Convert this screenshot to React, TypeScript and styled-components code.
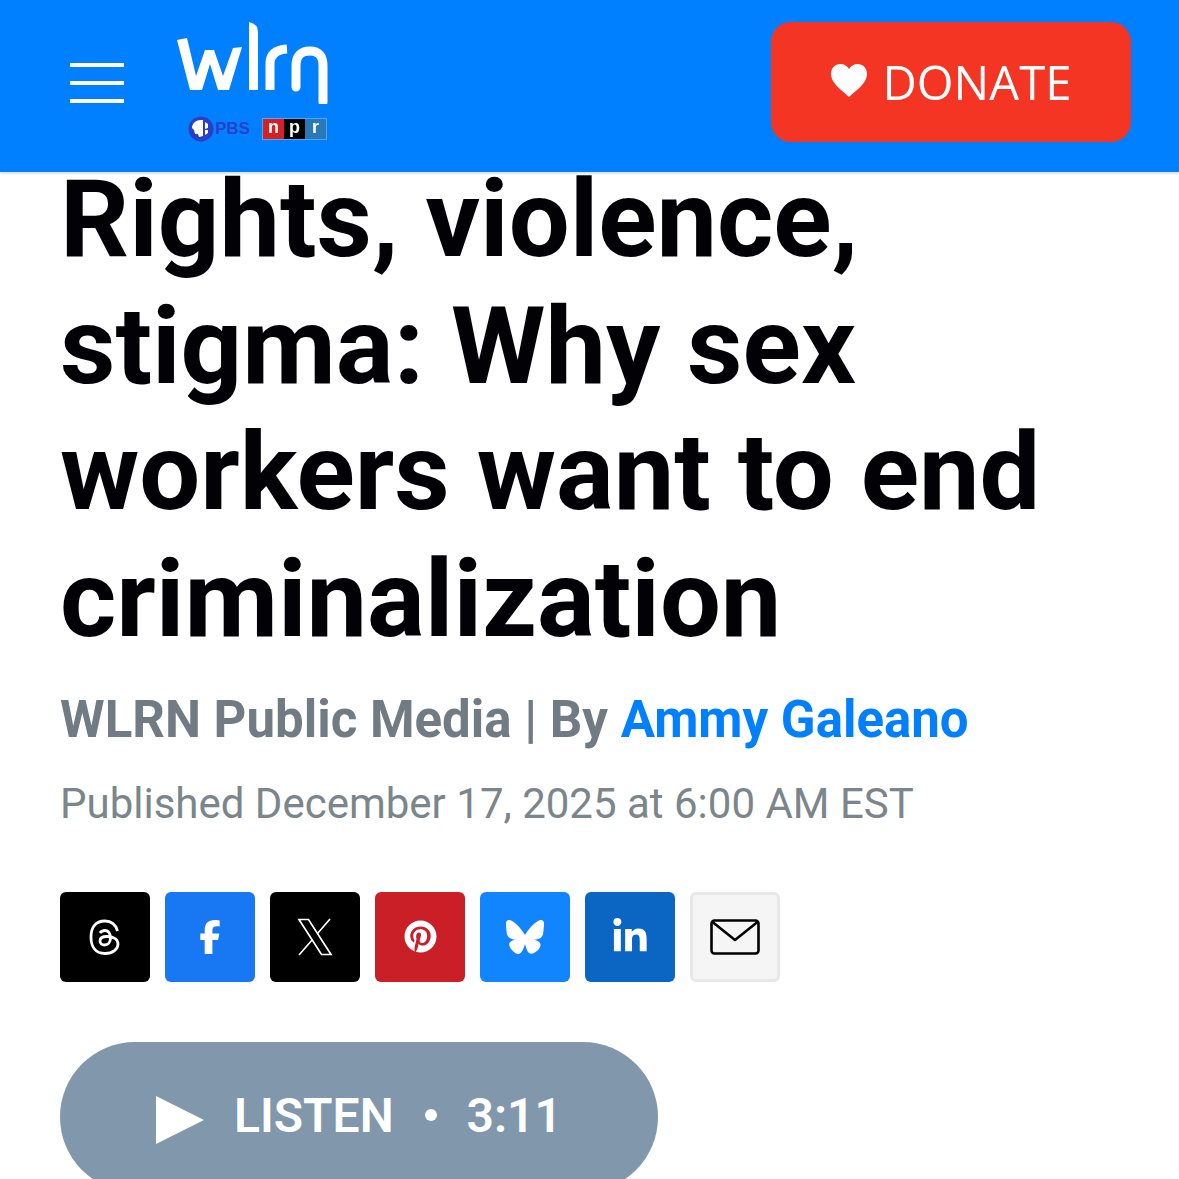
import styled, { createGlobalStyle } from "styled-components";
import { FaBluesky, FaFacebookF, FaLinkedinIn, FaPinterest } from "react-icons/fa6";

const GlobalStyle = createGlobalStyle`
  html, body {
    margin: 0;
    height: 100%;
    overflow: hidden;
    background: #fff;
  }
  * { box-sizing: border-box; }
`;

const Header = styled.header`
  position: fixed;
  top: 0;
  left: 0;
  right: 0;
  z-index: 2;
  height: 172px;
  background: #0080ff;
  box-shadow: 0 2px 2px rgba(0, 0, 0, 0.12);
  display: flex;
  align-items: center;
  padding: 0 48px 0 70px;
`;

const Burger = styled.div`
  width: 54px;
  display: flex;
  flex-direction: column;
  gap: 14px;
  margin-top: -6px;

  span {
    display: block;
    height: 4px;
    background: #fff;
  }
`;

const LogoBlock = styled.div`
  margin-left: 50px;
  width: 160px;
  display: flex;
  flex-direction: column;
  align-self: flex-start;
  padding-top: 20px;
`;

const LogoRow = styled.div`
  display: flex;
  align-items: center;
  margin: 12px 0 0 14px;
  height: 26px;
`;

const PbsText = styled.span`
  font: 700 17px "Liberation Sans", sans-serif;
  color: #2a3fc4;
  margin-left: 1px;
`;

const NprBox = styled.div`
  display: flex;
  margin-left: 12px;
  height: 22px;
  border: 1px solid rgba(255, 255, 255, 0.3);
`;

const NprLetter = styled.span<{ $bg: string }>`
  width: 21px;
  background: ${(p) => p.$bg};
  color: #fff;
  font: 700 18px/17px "Liberation Sans", sans-serif;
  text-align: center;
`;

const DonateButton = styled.button`
  margin-left: auto;
  margin-top: -8px;
  width: 360px;
  height: 120px;
  border: 0;
  border-radius: 20px;
  background: #f43524;
  color: #fff;
  font: 400 47.3px "Open Sans", sans-serif;
  display: flex;
  align-items: center;
  justify-content: center;
  gap: 16px;
  padding: 0 0 2px 0;
`;

const Article = styled.main`
  padding: 156px 60px 0;
`;

const Title = styled.h1`
  margin: 0;
  font: 700 108px/126.7px Roboto, sans-serif;
  color: #020206;
`;

const Byline = styled.div`
  margin-top: 27px;
  font: 700 51px/60px Roboto, sans-serif;
  color: #717b83;

  a {
    color: #0080ff;
    text-decoration: none;
  }
`;

const Published = styled.div`
  margin-top: 29px;
  font: 400 42px/50px Roboto, sans-serif;
  color: #7b858c;
`;

const ShareRow = styled.div`
  margin-top: 63px;
  display: flex;
  gap: 15px;
`;

const ShareButton = styled.a<{ $bg: string; $fg?: string; $border?: string }>`
  width: 90px;
  height: 90px;
  border-radius: 6px;
  background: ${(p) => p.$bg};
  color: ${(p) => p.$fg || "#fff"};
  border: ${(p) => (p.$border ? `3px solid ${p.$border}` : "0")};
  display: flex;
  align-items: center;
  justify-content: center;
`;

const ListenButton = styled.button`
  margin-top: 60px;
  width: 598px;
  height: 150px;
  border: 0;
  border-radius: 75px;
  background: #8197ab;
  color: #fff;
  font: 600 48px Roboto, sans-serif;
  display: flex;
  align-items: center;
  padding: 0 0 2px 96px;
`;

const PlayIcon = styled.svg`
  margin-top: 8px;
`;

const ListenLabel = styled.span`
  margin-left: 30px;
`;

const Dot = styled.span`
  width: 12px;
  height: 12px;
  border-radius: 50%;
  background: #fff;
  margin: -2px 30px 0 31px;
`;

function WlrnMark() {
  return (
    <svg width="156" height="84" viewBox="0 0 156 84" fill="#fff">
      <path d="M3 20 L13 18 L22 56 L31 30 L40 30 L49 56 L59 28 L68 27 L55 70 L44 70 L36 44 L28 70 L16 70 Z" />
      <path d="M75 2 Q84 4 84 12 V70 H75 Z" />
      <g fill="none" stroke="#fff" strokeWidth="9">
        <path d="M96 70 V44 Q96 30 113 29" />
        <path d="M122 67 V46 Q122 31 136 31 Q149 31 149 46 V82" strokeLinecap="round" />
      </g>
    </svg>
  );
}

function PbsHead() {
  return (
    <svg width="26" height="26" viewBox="0 0 26 26">
      <circle cx="13" cy="13" r="12.5" fill="#2a3fc4" />
      <path d="M4 12 C4 7 8 4 13 4 L15 4 V20 L11 21 L10 18 L7 18 L6 14 Z" fill="#fff" />
      <path d="M17 6 L20 8 V12 L17 13 Z M17 14 L20 14 V17 L17 19 Z" fill="#fff" />
    </svg>
  );
}

function Heart() {
  return (
    <svg width="36" height="34" viewBox="0 0 36 34" fill="#fff">
      <path d="M18 33 C12 27 0 20 0 10 C0 4 4 0 9.500 0 C13 0 16.500 2 18 5 C19.500 2 23 0 26.500 0 C32 0 36 4 36 10 C36 20 24 27 18 33 Z" />
    </svg>
  );
}

function ThreadsIcon() {
  return (
    <svg width="50" height="50" viewBox="0 0 50 50" fill="none" stroke="#fff" strokeWidth="2.8">
      <path d="M37.500 19 C35.500 12 31 9 25 9 C15 9 11 16 11 25 C11 34 15 41.500 25 41.500 C33 41.500 38 37 38 32 C38 27 33 24.500 27 24.500 C22 24.500 20 26.500 20 29 C20 31.500 22 33 24.500 33 C28 33 30.500 30.500 30.500 26 C30.500 21 28 18.500 25 18.500 C22.500 18.500 21 19.500 20 21" />
    </svg>
  );
}

function XIcon() {
  return (
    <svg width="40" height="40" viewBox="0 0 40 40" fill="none" stroke="#fff" strokeWidth="1.7">
      <path d="M4 2.500 H13.500 L36 37.500 H26.500 Z" />
      <path d="M35 2 L22.500 16.500 M17.500 22.500 L4 38" />
    </svg>
  );
}

function MailIcon() {
  return (
    <svg width="50" height="36" viewBox="0 0 50 36" fill="none" stroke="#000" strokeWidth="2.600">
      <rect x="1.500" y="1.500" width="47" height="33" rx="3" />
      <path d="M2.500 3 L25 21 L47.500 3" strokeLinejoin="round" />
    </svg>
  );
}

export default function App() {
  return (
    <>
      <GlobalStyle />
      <Header>
        <Burger>
          <span />
          <span />
          <span />
        </Burger>
        <LogoBlock>
          <WlrnMark />
          <LogoRow>
            <PbsHead />
            <PbsText>PBS</PbsText>
            <NprBox>
              <NprLetter $bg="#d62021">n</NprLetter>
              <NprLetter $bg="#000">p</NprLetter>
              <NprLetter $bg="#2a78b5">r</NprLetter>
            </NprBox>
          </LogoRow>
        </LogoBlock>
        <DonateButton>
          <Heart />
          DONATE
        </DonateButton>
      </Header>
      <Article>
        <Title>
          Rights, violence,
          <br />
          stigma: Why sex
          <br />
          workers want to end
          <br />
          criminalization
        </Title>
        <Byline>
          WLRN Public Media | By <a href="#">Ammy Galeano</a>
        </Byline>
        <Published>Published December 17, 2025 at 6:00 AM EST</Published>
        <ShareRow>
          <ShareButton $bg="#000">
            <ThreadsIcon />
          </ShareButton>
          <ShareButton $bg="#1877f2">
            <FaFacebookF size={34} />
          </ShareButton>
          <ShareButton $bg="#000">
            <XIcon />
          </ShareButton>
          <ShareButton $bg="#cb1f27">
            <FaPinterest size={33} />
          </ShareButton>
          <ShareButton $bg="#1185fe">
            <FaBluesky size={38} />
          </ShareButton>
          <ShareButton $bg="#0a66c2">
            <FaLinkedinIn size={38} />
          </ShareButton>
          <ShareButton $bg="#f5f5f5" $border="#e8e8e8">
            <MailIcon />
          </ShareButton>
        </ShareRow>
        <ListenButton>
          <PlayIcon width="48" height="48" viewBox="0 0 48 48" fill="#fff">
            <path d="M0 0 L48 24 L0 48 Z" />
          </PlayIcon>
          <ListenLabel>LISTEN</ListenLabel>
          <Dot />
          <span>3:11</span>
        </ListenButton>
      </Article>
    </>
  );
}
